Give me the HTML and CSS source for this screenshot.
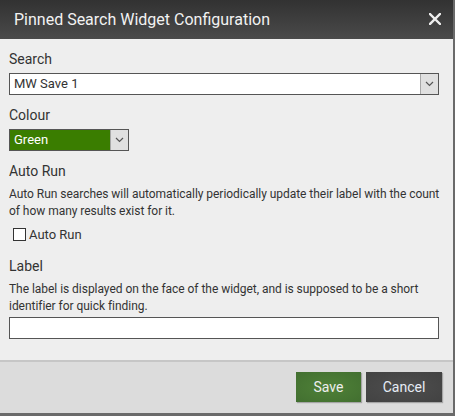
FILE: index.html
```html
<!DOCTYPE html>
<html>
<head>
<meta charset="utf-8">
<link rel="stylesheet" href="styles.css">
</head>
<body>
<div class="dialog">
  <header class="dlg-head">
    <h1 class="dlg-title">Pinned Search Widget Configuration</h1>
    <button class="dlg-close" aria-label="Close">
      <svg width="12" height="12" viewBox="0 0 12 12"><path d="M1 1L11 11M11 1L1 11" stroke="#eeeeee" stroke-width="2.4" stroke-linecap="square" fill="none"/></svg>
    </button>
  </header>
  <div class="dlg-body">
    <div class="field">
      <div class="lbl">Search</div>
      <div class="select select-wide">
        <span class="select-text">MW Save 1</span>
        <span class="select-arrow"><svg width="9" height="6" viewBox="0 0 9 6"><path d="M1 1L4.5 4.5L8 1" stroke="#555" stroke-width="1.2" fill="none"/></svg></span>
      </div>
    </div>
    <div class="field">
      <div class="lbl">Colour</div>
      <div class="select select-green">
        <span class="select-text">Green</span>
        <span class="select-arrow"><svg width="9" height="6" viewBox="0 0 9 6"><path d="M1 1L4.5 4.5L8 1" stroke="#555" stroke-width="1.2" fill="none"/></svg></span>
      </div>
    </div>
    <div class="field field-check">
      <div class="lbl lbl-tight">Auto Run</div>
      <p class="desc">Auto Run searches will automatically periodically update their label with the count of how many results exist for it.</p>
      <label class="check-row"><span class="checkbox"></span><span class="check-text">Auto Run</span></label>
    </div>
    <div class="field">
      <div class="lbl lbl-tight">Label</div>
      <p class="desc">The label is displayed on the face of the widget, and is supposed to be a short identifier for quick finding.</p>
      <div class="text-input"></div>
    </div>
  </div>
  <footer class="dlg-foot">
    <button class="btn btn-save">Save</button>
    <button class="btn btn-cancel">Cancel</button>
  </footer>
</div>
</body>
</html>
```

FILE: styles.css
```css
html, body {
  margin: 0;
  padding: 0;
}
body {
  width: 455px;
  height: 416px;
  background: #6a6a6a;
  font-family: Roboto, "Liberation Sans", sans-serif;
  color: #333;
  overflow: hidden;
}
.dialog {
  width: 453px;
  height: 413px;
  display: flex;
  flex-direction: column;
  background: #eeeeee;
}
.dlg-head {
  height: 39px;
  flex: none;
  display: flex;
  align-items: center;
  justify-content: space-between;
  padding: 0 12px 0 14px;
  box-sizing: border-box;
  background: linear-gradient(to bottom, #323232, #4a4a4a);
}
.dlg-title {
  margin: 0;
  font-size: 16px;
  font-weight: 400;
  color: #f2f2f2;
  line-height: 20px;
}
.dlg-close {
  border: 0;
  background: none;
  padding: 0;
  width: 12px;
  height: 12px;
  display: flex;
  margin-top: -2px;
}
.dlg-body {
  flex: 1;
  padding: 10px 8px 0 9px;
}
.field {
  margin-bottom: 10px;
}
.field-check {
  margin-bottom: 13px;
}
.lbl {
  font-size: 14px;
  line-height: 20px;
  margin-bottom: 4px;
}
.lbl-tight {
  margin-bottom: 5px;
}
.select {
  height: 22px;
  box-sizing: border-box;
  border: 1px solid #555;
  background: #fff;
  display: flex;
  align-items: stretch;
}
.select-wide {
  width: 430px;
}
.select-green {
  width: 120px;
  background: #3a7d00;
  color: #fff;
}
.select-text {
  flex: 1;
  font-size: 13px;
  line-height: 20px;
  padding-left: 4px;
}
.select-arrow {
  width: 17px;
  background: #e0e0e0;
  border-left: 1px solid #a8a8a8;
  display: flex;
  align-items: center;
  justify-content: center;
}
.desc {
  margin: 0;
  font-size: 12px;
  line-height: 17px;
  letter-spacing: -0.04px;
}
.check-row {
  display: flex;
  align-items: center;
  height: 20px;
  margin-top: 3px;
  padding-left: 4px;
}
.checkbox {
  width: 13px;
  height: 13px;
  box-sizing: border-box;
  border: 1px solid #333;
  background: #fff;
  margin-top: 3px;
}
.check-text {
  font-size: 13px;
  line-height: 20px;
  margin-left: 3px;
  margin-top: 3px;
}
.text-input {
  width: 430px;
  height: 22px;
  box-sizing: border-box;
  border: 1px solid #555;
  background: #fff;
  margin-top: 2px;
}
.dlg-foot {
  flex: none;
  height: 53px;
  box-sizing: border-box;
  border-top: 2px solid #c6c6c6;
  background: #dcdcdc;
  display: flex;
  justify-content: flex-end;
  align-items: flex-start;
  gap: 5px;
  padding: 10px 11px 0 0;
}
.btn {
  height: 30px;
  border: 0;
  padding: 0;
  font-family: Roboto, "Liberation Sans", sans-serif;
  font-size: 14px;
  color: #eeeeee;
  box-shadow: 1px 1px 1px rgba(0,0,0,0.25);
}
.btn-save {
  width: 65px;
  background: radial-gradient(ellipse at center, #4f8138 0%, #426f30 100%);
}
.btn-cancel {
  width: 76px;
  color: #e6ecf5;
  background: radial-gradient(ellipse at center, #4e4e4e 0%, #424242 100%);
}
```
